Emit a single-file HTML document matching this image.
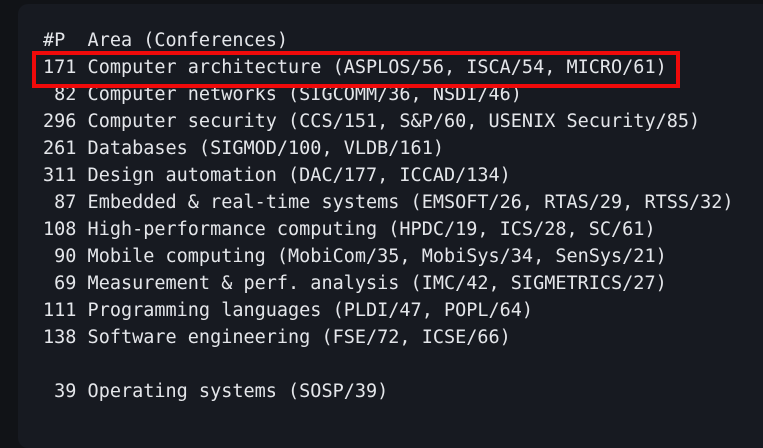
<!DOCTYPE html>
<html><head><style>
html,body{margin:0;padding:0;width:763px;height:428px;overflow:hidden;background:#111317}
.panel{position:absolute;left:18px;top:4px;right:-20px;bottom:-20px;background:#171a21;border-radius:10px}
pre{position:absolute;left:43px;top:27px;margin:0;font-family:"DejaVu Sans Mono","Liberation Mono",monospace;font-size:18.5px;line-height:27px;color:#e4e6ea;white-space:pre}
.box{position:absolute;left:32px;top:51px;width:640px;height:29px;border:4px solid #f00a0a}
</style></head><body>
<div class="panel"></div>
<pre>#P  Area (Conferences)
171 Computer architecture (ASPLOS/56, ISCA/54, MICRO/61)
 82 Computer networks (SIGCOMM/36, NSDI/46)
296 Computer security (CCS/151, S&amp;P/60, USENIX Security/85)
261 Databases (SIGMOD/100, VLDB/161)
311 Design automation (DAC/177, ICCAD/134)
 87 Embedded &amp; real-time systems (EMSOFT/26, RTAS/29, RTSS/32)
108 High-performance computing (HPDC/19, ICS/28, SC/61)
 90 Mobile computing (MobiCom/35, MobiSys/34, SenSys/21)
 69 Measurement &amp; perf. analysis (IMC/42, SIGMETRICS/27)
111 Programming languages (PLDI/47, POPL/64)
138 Software engineering (FSE/72, ICSE/66)

 39 Operating systems (SOSP/39)</pre>
<div class="box"></div>
</body></html>
